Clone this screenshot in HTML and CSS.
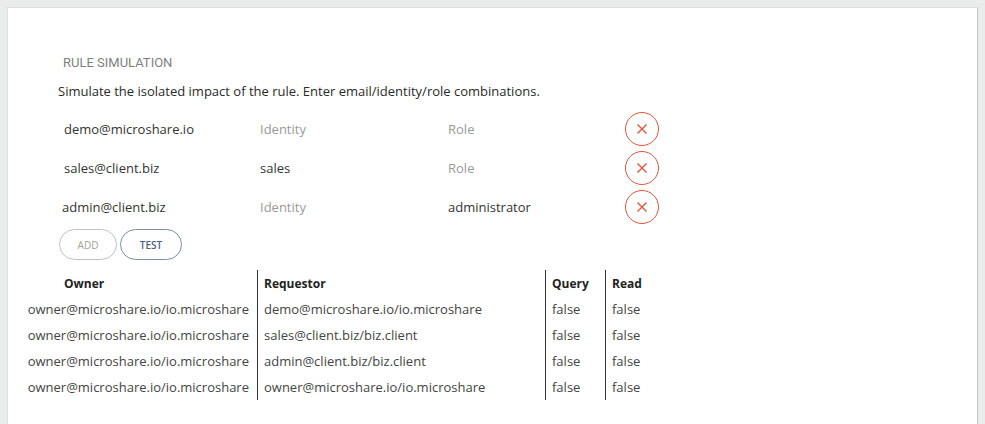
FILE: index.html
```html
<!DOCTYPE html>
<html>
<head>
<meta charset="utf-8">
<link rel="stylesheet" href="styles.css">
</head>
<body>
<div class="panel">
  <section class="sim">
    <h2 class="title">RULE SIMULATION</h2>
    <p class="intro">Simulate the isolated impact of the rule. Enter email/identity/role combinations.</p>
    <div class="rows">
      <div class="row">
        <span class="field email">demo@microshare.io</span>
        <span class="field ident placeholder">Identity</span>
        <span class="field role placeholder">Role</span>
        <button class="remove" aria-label="remove"><svg width="12" height="12" viewBox="0 0 12 12"><path d="M1.5 1.5 L10.5 10.5 M10.5 1.5 L1.5 10.5" stroke="#e0553a" stroke-width="1.4" fill="none"/></svg></button>
      </div>
      <div class="row">
        <span class="field email">sales@client.biz</span>
        <span class="field ident">sales</span>
        <span class="field role placeholder">Role</span>
        <button class="remove" aria-label="remove"><svg width="12" height="12" viewBox="0 0 12 12"><path d="M1.5 1.5 L10.5 10.5 M10.5 1.5 L1.5 10.5" stroke="#e0553a" stroke-width="1.4" fill="none"/></svg></button>
      </div>
      <div class="row">
        <span class="field email shift">admin@client.biz</span>
        <span class="field ident placeholder">Identity</span>
        <span class="field role">administrator</span>
        <button class="remove" aria-label="remove"><svg width="12" height="12" viewBox="0 0 12 12"><path d="M1.5 1.5 L10.5 10.5 M10.5 1.5 L1.5 10.5" stroke="#e0553a" stroke-width="1.4" fill="none"/></svg></button>
      </div>
    </div>
    <div class="actions">
      <button class="pill add">ADD</button>
      <button class="pill test">TEST</button>
    </div>
  </section>
  <div class="results" role="table">
    <div class="cell th c-owner">Owner</div><div class="cell th c-req">Requestor</div><div class="cell th c-q">Query</div><div class="cell th c-r">Read</div>
    <div class="cell c-owner">owner@microshare.io/io.microshare</div><div class="cell c-req">demo@microshare.io/io.microshare</div><div class="cell c-q">false</div><div class="cell c-r">false</div>
    <div class="cell c-owner">owner@microshare.io/io.microshare</div><div class="cell c-req">sales@client.biz/biz.client</div><div class="cell c-q">false</div><div class="cell c-r">false</div>
    <div class="cell c-owner">owner@microshare.io/io.microshare</div><div class="cell c-req">admin@client.biz/biz.client</div><div class="cell c-q">false</div><div class="cell c-r">false</div>
    <div class="cell c-owner">owner@microshare.io/io.microshare</div><div class="cell c-req">owner@microshare.io/io.microshare</div><div class="cell c-q">false</div><div class="cell c-r">false</div>
  </div>
</div>
</body>
</html>
```
FILE: styles.css
```css
html, body {
  margin: 0;
  padding: 0;
  background: #e9eceb;
  height: 100%;
  overflow: hidden;
}
body {
  font-family: "Open Sans", "Liberation Sans", sans-serif;
  color: #333;
}
.panel {
  margin: 7px 7px 0 7px;
  background: #fff;
  border: 1px solid #dde0e0;
  border-right-color: #c6c8c8;
  border-bottom: none;
  height: 417px;
  box-sizing: border-box;
}
.sim {
  padding: 47px 0 0 50px;
}
.title {
  margin: 0 0 0 5px;
  font-family: Roboto, "Liberation Sans", sans-serif;
  font-weight: 400;
  font-size: 13px;
  line-height: 16px;
  color: #7f7f7f;
  letter-spacing: 0;
}
.intro {
  margin: 11px 0 9px 0;
  font-size: 13px;
  line-height: 18px;
  color: #2a2a2a;
}
.rows {
  display: flex;
  flex-direction: column;
}
.row {
  display: flex;
  align-items: center;
  height: 39px;
}
.field {
  box-sizing: border-box;
  padding-left: 6px;
  font-size: 13px;
  color: #333;
}
.field.shift { padding-left: 4px; }
.email { width: 196px; }
.ident { width: 188px; }
.role { width: 183px; }
.placeholder { color: #999; }
.remove {
  margin: 0;
  padding: 0;
  width: 34px;
  height: 34px;
  border-radius: 50%;
  border: 1px solid #e0553a;
  background: #fff;
  display: flex;
  align-items: center;
  justify-content: center;
}
.actions {
  display: flex;
  gap: 3px;
  margin: 3px 0 0 1px;
}
.pill {
  margin: 0;
  height: 31px;
  border-radius: 16px;
  background: #fff;
  font-family: "Open Sans", "Liberation Sans", sans-serif;
  font-size: 10px;
  padding: 0;
}
.add {
  width: 58px;
  border: 1px solid #c2c2c2;
  color: #a0a0a0;
}
.test {
  width: 62px;
  border: 1.5px solid #7b8ea8;
  color: #4a6082;
  font-weight: 600;
}
.results {
  display: grid;
  grid-template-columns: 236px 288px 60px 60px;
  grid-auto-rows: 26px;
  margin: 10px 0 0 14px;
  font-size: 13px;
}
.cell {
  display: flex;
  align-items: center;
  padding: 0 6px;
  white-space: nowrap;
  color: #444;
  box-sizing: border-box;
}
.cell.th {
  font-size: 12px;
  font-weight: 700;
  color: #222;
}
.c-owner {
  justify-content: flex-end;
  padding-right: 8px;
  border-right: 1px solid #333;
}
.th.c-owner {
  justify-content: flex-start;
  padding-left: 42px;
}
.c-req, .c-q { border-right: 1px solid #333; }
```
